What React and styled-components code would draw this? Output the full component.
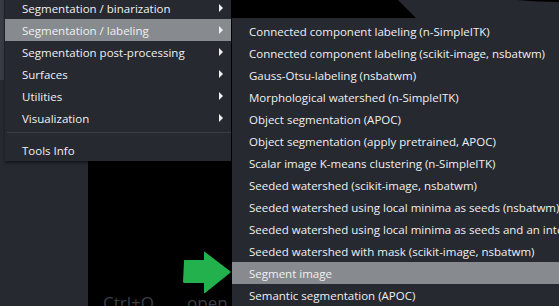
import React from "react";
import styled, { createGlobalStyle } from "styled-components";

const GlobalStyle = createGlobalStyle`
html, body {
  margin: 0;
  padding: 0;
  background: #262930;
  overflow: hidden;
}
`

const mainItems = [
    { label: "Segmentation / binarization", sub: true },
    { label: "Segmentation / labeling", sub: true, active: true },
    { label: "Segmentation post-processing", sub: true },
    { label: "Surfaces", sub: true },
    { label: "Utilities", sub: true },
    { label: "Visualization", sub: true },
]

const subItems = [
    "Connected component labeling (n-SimpleITK)",
    "Connected component labeling (scikit-image, nsbatwm)",
    "Gauss-Otsu-labeling (nsbatwm)",
    "Morphological watershed (n-SimpleITK)",
    "Object segmentation (APOC)",
    "Object segmentation (apply pretrained, APOC)",
    "Scalar image K-means clustering (n-SimpleITK)",
    "Seeded watershed (scikit-image, nsbatwm)",
    "Seeded watershed using local minima as seeds (nsbatwm)",
    "Seeded watershed using local minima as seeds and an intensity threshold (nsbatwm)",
    "Seeded watershed with mask (scikit-image, nsbatwm)",
    "Segment image",
    "Semantic segmentation (APOC)",
]

export default function App() {
    return (
        <>
            <GlobalStyle />
            <Screen>
                <Sidebar>
                    <Strip />
                </Sidebar>
                <Canvas>
                    <Logo width="471" height="40" viewBox="0 0 471 40">
                        <path d="M310 0 L429 0 Q450 2 471 2 L471 40 L350 40 Z" fill="#262930" />
                    </Logo>
                    <Welcome>
                        <Key>Ctrl+O</Key>
                        <span>open image(s)</span>
                    </Welcome>
                </Canvas>

                <Menu>
                    {mainItems.map((it) => (
                        <MenuItem key={it.label} $active={it.active}>
                            <span>{it.label}</span>
                            {it.sub && <SubArrow />}
                        </MenuItem>
                    ))}
                    <Separator />
                    <MenuItem>
                        <span>Tools Info</span>
                    </MenuItem>
                </Menu>

                <SubMenu>
                    {subItems.map((label) => (
                        <SubItem key={label} $active={label === "Segment image"}>
                            {label}
                        </SubItem>
                    ))}
                </SubMenu>

                <Pointer width="49" height="43" viewBox="0 0 49 43">
                    <path
                        d="M1 10 Q0 9 2 9 L21 9 L21 1 Q21 0 22 1 L47 20 Q48 21 47 22 L22 42 Q21 43 21 41 L21 32 L2 32 Q0 32 0 31 Z"
                        fill="#22b14c"
                    />
                </Pointer>
            </Screen>
        </>
    )
}

const Screen = styled.div`
position: relative;
width: 559px;
height: 306px;
display: flex;
overflow: hidden;
font-family: 'Open Sans', 'Noto Sans', sans-serif;
`
const Sidebar = styled.div`
width: 88px;
flex-shrink: 0;
background: #262930;
`
const Strip = styled.div`
width: 4px;
height: 80px;
background: #393c44;
`
const Canvas = styled.div`
flex: 1;
position: relative;
background: #000000;
display: flex;
flex-direction: column;
padding-top: 292px;
`
const Logo = styled.svg`
position: absolute;
left: 0;
top: 0;
`
const Welcome = styled.div`
box-sizing: border-box;
width: 144px;
overflow: hidden;
display: flex;
font-size: 17px;
line-height: 22px;
color: #3b3f47;
padding-left: 15px;
white-space: nowrap;
`
const Key = styled.span`
flex-shrink: 0;
width: 84px;
`
const Menu = styled.div`
position: absolute;
left: 5px;
top: -3px;
width: 226px;
background: #262930;
box-shadow: 0px 2px 3px rgba(0, 0, 0, 0.45);
`
const MenuItem = styled.div`
height: 22px;
display: flex;
align-items: center;
justify-content: space-between;
padding-left: 17px;
padding-right: 8px;
font-size: 11.5px;
color: #f0f0f0;
background: ${(p) => (p.$active ? "#878b90" : "transparent")};
`
const SubArrow = styled.i`
width: 0;
height: 0;
border-top: 4px solid transparent;
border-bottom: 4px solid transparent;
border-left: 4px solid #f0f0f0;
`
const Separator = styled.div`
height: 1px;
margin: 3px 0 6px 2px;
background: #3c3f47;
`
const SubMenu = styled.div`
position: absolute;
left: 232px;
top: 18px;
right: 0;
bottom: 0;
padding-top: 2px;
background: #262930;
`
const SubItem = styled.div`
height: 22px;
display: flex;
align-items: center;
padding-left: 17px;
font-size: 11.5px;
color: #f0f0f0;
white-space: nowrap;
background: ${(p) => (p.$active ? "#878b90" : "transparent")};
`
const Pointer = styled.svg`
position: absolute;
left: 183px;
top: 251px;
`
